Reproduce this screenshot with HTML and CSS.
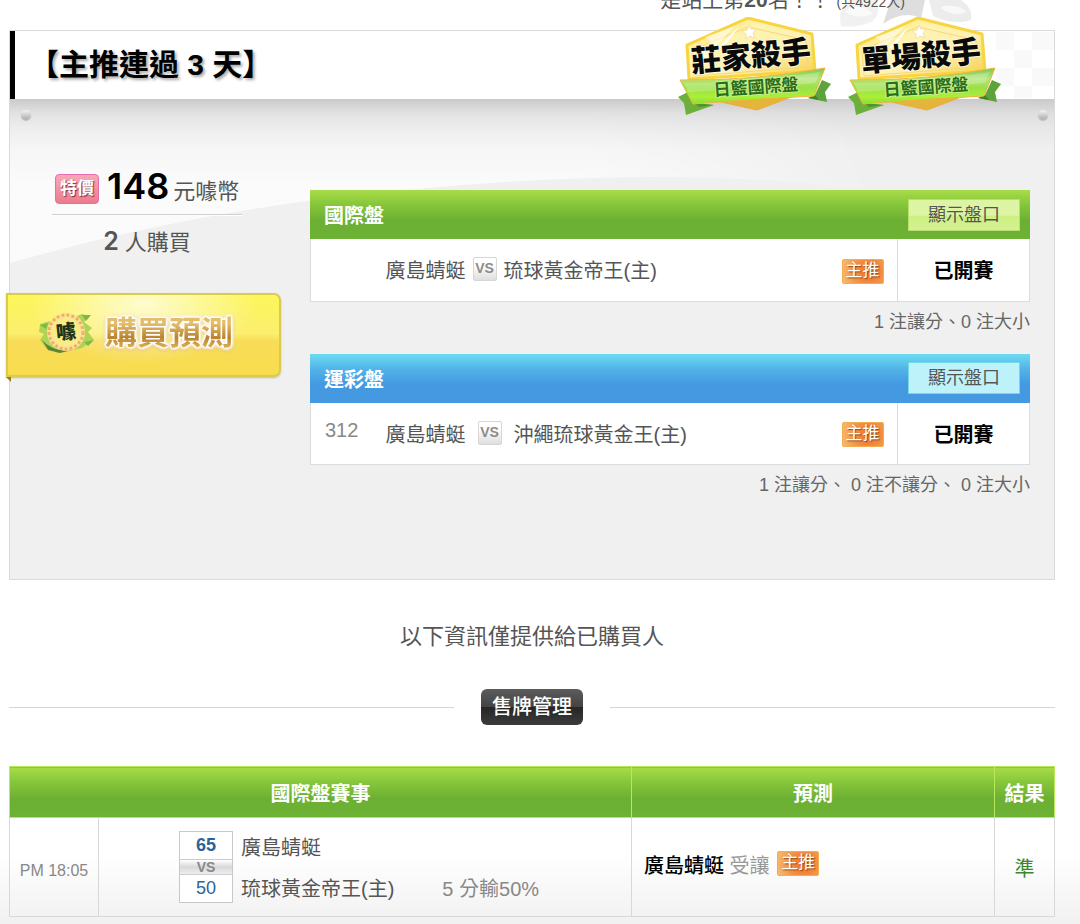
FILE: index.html
```
<!DOCTYPE html>
<html lang="zh-Hant-TW">
<head>
    <meta charset="UTF-8" />
    <meta name="viewport" content="width=device-width, initial-scale=1.0" />
    <title>主推連過 3 天</title>
    <link rel="stylesheet" href="styles.css">
</head>
<body>
    <!-- shared badge shape -->
    <svg class="defs" width="0" height="0" aria-hidden="true">
        <defs>
            <linearGradient id="gold" x1="0" y1="0" x2="1" y2="1">
                <stop offset="0" stop-color="#ffe45c" />
                <stop offset="0.35" stop-color="#fff3b0" />
                <stop offset="0.6" stop-color="#fdf0b4" />
                <stop offset="1" stop-color="#f7cf45" />
            </linearGradient>
            <linearGradient id="ribbon" x1="0" y1="0" x2="0" y2="1">
                <stop offset="0" stop-color="#7cc84a" />
                <stop offset="0.3" stop-color="#b4e67c" />
                <stop offset="0.55" stop-color="#9be044" />
                <stop offset="0.8" stop-color="#a9f03a" />
                <stop offset="1" stop-color="#8ede30" />
            </linearGradient>
            <symbol id="badge-shape" viewBox="0 0 155 100">
                <path d="M22 80 L80 93 L122 77 Z" fill="#e3b53a" stroke="#f2a93a" />
                <path d="M71 1 L135 17 L138 54 L12 62 L10 28 Z" fill="url(#gold)" stroke="#f8d53f" stroke-width="3" stroke-linejoin="round" />
                <path d="M71 10 L129 23 L131 50 L17 59 L15 33 Z" fill="none" stroke="#f7d878" />
                <path d="M28 20 L58 9 L38 30 L36 45 L18 50 Q22 34 34 24 Z" fill="#fff" opacity="0.55" />
                <path d="M54 17 L62 10 L46 31 L42 31 Z" fill="#fff" opacity="0.9" />
                <path d="M72 8 l2 4 5 0 -3 4 2 5 -5 -2 -4 3 0 -5 -4 -3 5 -1 Z" fill="#fff" stroke="#f3dfa8" />
                <path d="M1 80 L11 75 L17 86 L37 88 L9 98 L7 86 Z" fill="#6bb03a" />
                <path d="M17 86 L37 88 L22 90 Z" fill="#4d9430" />
                <path d="M145 63 L154 67 L148 75 L150 85 L131 81 L138 78 Z" fill="#5da23a" />
                <path d="M131 81 L138 78 L142 83 Z" fill="#3f8427" />
                <path d="M3 63 Q76 64 148 51 L137 79 Q76 82 16 87 Z" fill="url(#ribbon)" stroke="#f0b43c" />
                <path d="M7 66 Q76 67 143 55 L138 66 Q90 70 11 75 Z" fill="#fff" opacity="0.22" />
            </symbol>
        </defs>
    </svg>

    <header class="rank">
        <svg class="watermark" viewBox="0 0 140 30" aria-hidden="true">
            <path d="M4 26 Q0 6 14 0 H40 Q44 16 34 22 Q20 28 4 26 Z" fill="#f1f1f1" />
            <path d="M8 12 Q20 20 36 14 Q28 4 12 8 Z" fill="#fafafa" />
            <path d="M46 24 L54 0 H88 L84 18 Q66 10 46 24 Z" fill="#dedede" />
            <path d="M92 0 H124 Q136 8 134 20 Q118 26 96 16 Z" fill="#ececec" />
            <path d="M104 8 Q116 18 130 12 Q120 4 106 6 Z" fill="#f8f8f8" />
        </svg>
        <p>是站上第<strong>20</strong>名！！ <small>(共4922人)</small></p>
    </header>

    <main>
        <section class="card">
            <div class="card-title">
                <h1>【主推連過 3 天】</h1>
                <svg class="checker" viewBox="0 0 72 66" aria-hidden="true">
                    <path d="M14 0h18v18h-18z M32 18h18v18h-18z M50 0h22v18h-22z M14 36h18v18h-18z M50 36h22v18h-22z M32 54h18v12h-18z" />
                </svg>
            </div>
            <div class="badges">
                <svg width="155" height="100" viewBox="0 0 155 100" role="img" aria-label="莊家殺手 日籃國際盤">
                    <use href="#badge-shape" width="155" height="100" />
                    <text class="badge-name" transform="rotate(-5 15 55)" x="15" y="55">莊家殺手</text>
                    <text class="badge-league" transform="rotate(-4 37 79)" x="37" y="79">日籃國際盤</text>
                </svg>
                <svg width="155" height="100" viewBox="0 0 155 100" role="img" aria-label="單場殺手 日籃國際盤">
                    <use href="#badge-shape" width="155" height="100" />
                    <text class="badge-name" transform="rotate(-5 15 55)" x="15" y="55">單場殺手</text>
                    <text class="badge-league" transform="rotate(-4 37 79)" x="37" y="79">日籃國際盤</text>
                </svg>
            </div>

            <div class="card-body">
                <svg class="swoosh" viewBox="0 0 1044 170" preserveAspectRatio="none" aria-hidden="true">
                    <defs>
                        <linearGradient id="swoosh-fill" x1="0" y1="0" x2="0" y2="1">
                            <stop offset="0" stop-color="#fff" stop-opacity="0" />
                            <stop offset="0.5" stop-color="#fff" stop-opacity="0.7" />
                            <stop offset="1" stop-color="#fff" stop-opacity="0.75" />
                        </linearGradient>
                        <linearGradient id="swoosh-fade">
                            <stop offset="0.55" stop-color="#fff" />
                            <stop offset="0.84" stop-color="#000" />
                        </linearGradient>
                        <mask id="swoosh-mask">
                            <rect width="1044" height="170" fill="url(#swoosh-fade)" />
                        </mask>
                    </defs>
                    <path d="M0 0 H1044 V120 Q840 78 650 78 Q480 78 290 103 Q140 124 0 164 Z" fill="url(#swoosh-fill)" mask="url(#swoosh-mask)" />
                </svg>
                <i class="screw screw-left"></i>
                <i class="screw screw-right"></i>

                <aside class="buy">
                    <p class="price"><span class="sale">特價</span><strong>148</strong><span>元噱幣</span></p>
                    <p class="buyers"><strong>2</strong> 人購買</p>
                    <button type="button" class="buy-button">
                        <svg width="56" height="42" viewBox="0 0 56 42" aria-hidden="true">
                            <path d="M2 12 L16 8 L12 14 L44 2 L52 4 L46 10 L54 16 L50 20 L56 28 L44 36 L20 41 L8 36 L2 28 L6 22 L1 20 Z" fill="#aed455" />
                            <path d="M44 3 L53 3 L48 9 Z M2 13 L10 11 L8 17 Z M46 30 L56 28 L50 34 Z" fill="#7db848" />
                            <path d="M4 28 Q14 40 34 38 L22 41 L10 38 Z" fill="#5d8436" />
                            <circle cx="28" cy="20" r="19" fill="#fbe59a" />
                            <circle cx="28" cy="20" r="17" fill="none" stroke="#f3b060" stroke-width="3" stroke-dasharray="3 2" />
                            <circle cx="28" cy="20" r="14" fill="#f9ec84" />
                            <text class="coin-text" x="18" y="27" transform="rotate(-6 28 20)">噱</text>
                        </svg>
                        <span>購買預測</span>
                    </button>
                </aside>

                <div class="markets">
                    <div class="market">
                        <div class="market-head green">
                            <h2>國際盤</h2>
                            <button type="button" class="toggle">顯示盤口</button>
                        </div>
                        <table class="match">
                            <tr>
                                <td class="no"></td>
                                <td>廣島蜻蜓<span class="vs">VS</span>琉球黃金帝王(主)</td>
                                <td class="pick"><span class="main-pick">主推</span></td>
                                <td class="status">已開賽</td>
                            </tr>
                        </table>
                        <p class="note">1 注讓分、0 注大小</p>
                    </div>
                    <div class="market">
                        <div class="market-head blue">
                            <h2>運彩盤</h2>
                            <button type="button" class="toggle">顯示盤口</button>
                        </div>
                        <table class="match">
                            <tr>
                                <td class="no">312</td>
                                <td>廣島蜻蜓<span class="vs vs-wide">VS</span>沖繩琉球黃金王(主)</td>
                                <td class="pick"><span class="main-pick">主推</span></td>
                                <td class="status">已開賽</td>
                            </tr>
                        </table>
                        <p class="note">1 注讓分、 0 注不讓分、 0 注大小</p>
                    </div>
                </div>
            </div>
        </section>

        <p class="info">以下資訊僅提供給已購買人</p>
        <h2 class="divider"><span>售牌管理</span></h2>

        <table class="results">
            <colgroup>
                <col class="col-time">
                <col>
                <col class="col-guess">
                <col class="col-result">
            </colgroup>
            <thead>
                <tr>
                    <th colspan="2">國際盤賽事</th>
                    <th>預測</th>
                    <th>結果</th>
                </tr>
            </thead>
            <tbody>
                <tr>
                    <td class="time">PM 18:05</td>
                    <td>
                        <div class="game">
                            <div class="score">
                                <b>65</b>
                                <i>VS</i>
                                <span>50</span>
                            </div>
                            <div class="teams">
                                <span>廣島蜻蜓</span>
                                <span>琉球黃金帝王(主)</span>
                                <span class="odds">5 分輸50%</span>
                            </div>
                        </div>
                    </td>
                    <td class="guess"><strong>廣島蜻蜓</strong> 受讓 <span class="main-pick">主推</span></td>
                    <td class="hit">準</td>
                </tr>
            </tbody>
        </table>
    </main>
</body>
</html>
```
FILE: styles.css
```
* { box-sizing: border-box; }
html { background: linear-gradient(#fff calc(100vh - 70px), #f1f1f1 100vh); }
body { margin: 0; padding: 0 25px 8px 9px; font-family: "Liberation Sans", "Noto Sans CJK TC", sans-serif; font-size: 20px; color: #555; }
h1, h2, p { margin: 0; }
button { font-family: inherit; cursor: pointer; }
table { border-collapse: collapse; width: 100%; }
.defs { position: absolute; }

.rank { position: relative; height: 30px; overflow: hidden; }
.rank p { position: relative; margin: -15px 150px 0 0; line-height: 30px; font-size: 21px; text-align: right; white-space: pre; }
.rank strong { font-weight: 700; }
.rank small { font-size: 14px; }
.watermark { position: absolute; top: 0; right: 78px; width: 140px; height: 30px; }

/* card */
.card { position: relative; border: 1px solid #dadada; background: #f0f0f0; }
.card-title { display: flex; align-items: center; justify-content: space-between; height: 68px; padding-left: 14px; border-left: 5px solid #000; background: #fff; }
.card-title h1 { font-size: 30px; line-height: 40px; color: #000; text-shadow: 2px 2px 3px rgba(0, 0, 0, 0.35); }
.checker { width: 72px; height: 66px; fill: #f9f9f9; }
.badges { position: absolute; top: -14px; right: 52px; z-index: 2; display: flex; gap: 15px; }
.badge-name { font-family: "Noto Sans CJK TC", sans-serif; font-size: 30px; font-weight: 900; fill: #0a0a0a; stroke: #fff7d0; stroke-width: 2px; stroke-linejoin: round; paint-order: stroke; }
.badge-league { font-family: "Noto Sans CJK TC", sans-serif; font-size: 17px; font-weight: 700; fill: #2a6c1c; stroke: #c9f089; stroke-width: 2px; paint-order: stroke; }

.card-body { position: relative; display: flex; gap: 29px; padding: 91px 24px 62px 0; background: linear-gradient(#cacaca, #dedede 14px, #e8e8e8 30px, #f0f0f0 50px); }
.swoosh { position: absolute; top: 0; left: 0; width: 100%; height: 170px; }
.screw { position: absolute; top: 11px; width: 10px; height: 10px; border-radius: 50%; background: linear-gradient(#f4f4f4, #aaa); box-shadow: 0 1px 1px #bbb; }
.screw-left { left: 11px; }
.screw-right { right: 6px; }

.buy { position: relative; flex: 0 0 270px; margin-top: -24px; }
.price, .buyers { width: 190px; margin-left: 42px; font-size: 22px; }
.price { display: flex; align-items: baseline; height: 49px; padding-left: 3px; border-bottom: 1px solid #d0d0d0; box-shadow: 0 1px 0 #fff; line-height: 40px; white-space: nowrap; }
.price strong { margin: 0 4px 0 8px; font-family: Inter, sans-serif; font-size: 36px; font-weight: 600; color: #000; }
.sale { align-self: flex-start; margin-top: 8px; padding: 0 4px; border: 1px solid #e86cae; border-radius: 4px; background: linear-gradient(#f7a8b8, #ec7c8c); font-size: 17px; font-weight: 700; line-height: 28px; color: #fff; text-shadow: 1px 1px 1px #7a3040; }
.buyers { height: 78px; padding-top: 8px; line-height: 36px; text-align: center; }
.buyers strong { font-family: Inter, sans-serif; font-size: 25px; font-weight: 600; }
.buy-button { position: relative; display: flex; align-items: center; gap: 10px; width: 275px; height: 84px; margin-left: -4px; padding: 0 0 4px 30px; border: 2px solid #d8cc4c; border-radius: 0 7px 7px 0; background: radial-gradient(ellipse at 50% 10%, rgba(255, 255, 255, 0.7), transparent 60%), linear-gradient(#fdf65a, #fbee6e 48%, #f8dc58 58%, #f9dc4e); box-shadow: 0 1px 2px #bbb; }
.buy-button span { padding: 0 1px; font-size: 32px; font-weight: 700; line-height: 46px; color: transparent; background: linear-gradient(#e4bc6a 30%, #b98430 60%, #dcab50 80%); background-clip: text; -webkit-background-clip: text; filter: drop-shadow(0 0 1px #fff) drop-shadow(0 0 1px #fff) drop-shadow(0 0 1px #fff) drop-shadow(0 0 1px #fff) drop-shadow(0 1px 1px #e0b860); }
.buy-button::after { content: ""; position: absolute; left: -2px; top: 82px; border-top: 5px solid #9c7c20; border-left: 5px solid transparent; }
.coin-text { font-family: "Noto Sans CJK TC", sans-serif; font-size: 20px; font-weight: 900; fill: #1c3318; }

.markets { position: relative; flex: 1; min-width: 0; }
.market-head { display: flex; align-items: center; justify-content: space-between; height: 49px; padding: 0 10px 0 14px; }
.market-head h2 { font-size: 20px; color: #fff; }
.green, .results th { background: linear-gradient(#a8dc48, #86c63a 30%, #6cb033 62%, #6cb234); }
.blue { background: linear-gradient(#6cdcf2, #52b4e8 30%, #4499e2 62%, #4499e0); }
.toggle { width: 112px; height: 32px; padding: 0; border: 1px solid #b8e070; background: linear-gradient(#dcf4a4 50%, #cdf080 55%, #d4f294); font-size: 18px; line-height: 28px; color: #555; }
.blue .toggle { border-color: #72d8e4; background: #bdf2fb; }
.match { background: #fff; border: 1px solid #dcdcdc; border-top: 0; }
.match td { height: 62px; padding: 0; white-space: nowrap; }
.match .no { width: 75px; padding: 0 0 6px 14px; color: #888; }
.match .pick { width: 56px; padding-top: 3px; }
.match .status { width: 132px; border-left: 1px solid #dcdcdc; font-weight: 700; color: #000; text-align: center; }
.vs { display: inline-block; width: 24px; height: 24px; margin: 0 7px; border: 1px solid #d6d6d6; border-radius: 2px; background: linear-gradient(#fff 30%, #dedede); font-size: 14px; font-weight: 700; line-height: 21px; color: #8c8c8c; text-align: center; vertical-align: 5px; }
.vs-wide { margin: 0 12px; }
.main-pick { display: inline-block; width: 42px; height: 25px; border: 1px solid #f4ac50; border-radius: 2px; background: radial-gradient(circle at 65% 50%, #ec6c2c, #f49848 60%, #f8bc70); font-size: 17px; line-height: 22px; color: #fff; text-align: center; text-shadow: 1px 1px 1px #8c4a1c; vertical-align: middle; }
.note { height: 52px; font-size: 18px; line-height: 41px; color: #666; text-align: right; }

.info { padding: 40px 0 36px; font-size: 22px; line-height: 33px; text-align: center; }
.divider { display: flex; align-items: center; gap: 27px; margin-bottom: 41px; font-size: 20px; font-weight: 500; }
.divider::before, .divider::after { content: ""; flex: 1; height: 1px; background: #d6d6d6; }
.divider span { padding: 0 11px; border-radius: 6px; background: linear-gradient(#5c5c5c, #444 49%, #262626 51%, #3c3c3c); line-height: 36px; color: #fff; }

/* results */
.results { table-layout: fixed; }
.col-time { width: 89px; }
.col-guess { width: 363px; }
.col-result { width: 60px; }
.results th { height: 51px; padding: 0; border: 1px solid #b8e85c; color: #fff; }
.results td { height: 99px; padding: 0; border: 1px solid #d8d8d8; }
.results .time { padding-top: 8px; font-size: 16px; color: #888; text-align: center; }
.game { display: flex; align-items: center; gap: 8px; padding-left: 80px; }
.score { width: 54px; border: 1px solid #c8c8c8; background: #fff; font-size: 18px; line-height: 27px; color: #2c6498; text-align: center; }
.score > * { display: block; }
.score i { border: solid #ccc; border-width: 1px 0; background: linear-gradient(#fff, #d8d8d8 50%, #eee); font-size: 14px; font-style: normal; font-weight: 700; line-height: 14px; color: #888; }
.teams { display: grid; grid-template-columns: auto auto; justify-content: start; column-gap: 48px; padding-top: 4px; line-height: 41px; white-space: nowrap; }
.teams span { grid-column: 1; }
.teams .odds { grid-column: 2; grid-row: 2; color: #888; }
.results .guess { padding-left: 12px; color: #999; }
.guess strong { font-weight: 500; color: #000; }
.guess .main-pick { margin: 0 0 8px 2px; }
.results .hit { color: #38882c; text-align: center; }
```
